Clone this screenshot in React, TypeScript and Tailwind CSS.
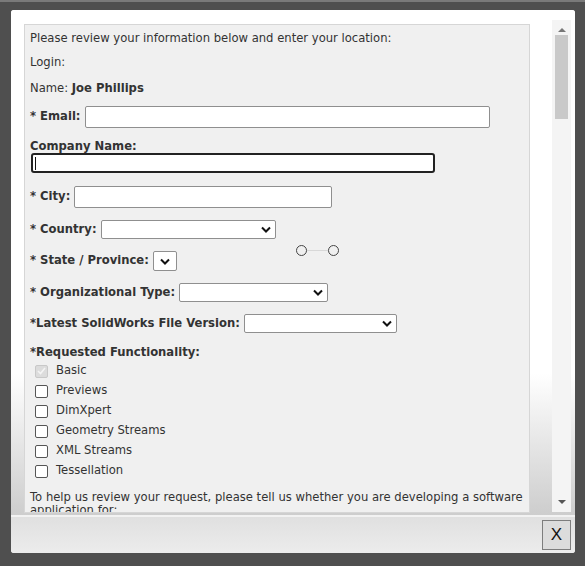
import React from "react";

const FONT = { fontFamily: '"DejaVu Sans", Verdana, sans-serif' };

function Chevron() {
  return (
    <svg width="10" height="7" viewBox="0 0 10 7" className="shrink-0">
      <path d="M1 1.5 L5 5.5 L9 1.5" fill="none" stroke="#111" strokeWidth="2" />
    </svg>
  );
}

function Select({ w }: { w: string }) {
  return (
    <div className={`${w} h-[19px] bg-white border border-[#8f8f8f] rounded-[2px] flex items-center justify-end pr-[4px]`}>
      <Chevron />
    </div>
  );
}

const FUNCTIONS = ["Previews", "DimXpert", "Geometry Streams", "XML Streams", "Tessellation"];

export default function App() {
  return (
    <div className="w-[585px] h-[566px] bg-[#4f4f4f] border-t-[2px] border-t-[#7a7a7a] pt-[8px] pl-[11px] pr-[10px] pb-[13px] overflow-hidden" style={FONT}>
      <div className="w-full h-full bg-white rounded-[3px] flex flex-col overflow-hidden">
        {/* body */}
        <div className="flex pt-[14px] pl-[13px] h-[505px] bg-gradient-to-b from-white from-[72%] to-[#cdcdcd]">
          <div className="relative w-[506px] h-[489px] bg-[#f0f0f0] border border-[#d6d6d6] overflow-hidden pl-[5px] pt-[6px] text-[11.6px] text-[#333]">
            <div className="h-[14px] leading-[14px]">Please review your information below and enter your location:</div>
            <div className="h-[14px] leading-[14px] mt-[10px]">Login:</div>
            <div className="h-[14px] leading-[14px] mt-[12px]">
              Name: <span className="font-bold">Joe Phillips</span>
            </div>
            <div className="h-[22px] mt-[11px] flex items-center font-bold">
              <span>* Email:</span>
              <div className="ml-[4px] w-[405px] h-[22px] bg-white border border-[#8f8f8f] rounded-[2px]" />
            </div>
            <div className="h-[14px] leading-[14px] mt-[11px] font-bold">Company Name:</div>
            <div className="ml-[1px] w-[404px] h-[20px] bg-white border-2 border-[#222] rounded-[3px] flex items-center pl-[2px]">
              <div className="w-px h-[13px] bg-[#111]" />
            </div>
            <div className="h-[22px] mt-[13px] flex items-center font-bold">
              <span>* City:</span>
              <div className="ml-[4px] w-[258px] h-[22px] bg-white border border-[#8f8f8f] rounded-[2px]" />
            </div>
            <div className="h-[19px] mt-[12px] flex items-center font-bold gap-[4px]">
              <span>* Country:</span>
              <Select w="w-[175px]" />
            </div>
            <div className="h-[20px] mt-[12px] flex items-center font-bold gap-[4px]">
              <span>* State / Province:</span>
              <div className="w-[24px] h-[20px] bg-white border border-[#8f8f8f] rounded-[2px] flex items-center justify-center">
                <Chevron />
              </div>
            </div>
            <div className="h-[19px] mt-[12px] flex items-center font-bold gap-[4px]">
              <span>* Organizational Type:</span>
              <Select w="w-[149px]" />
            </div>
            <div className="h-[19px] mt-[12px] flex items-center font-bold gap-[4px]">
              <span>*Latest SolidWorks File Version:</span>
              <Select w="w-[153px]" />
            </div>
            <div className="h-[14px] leading-[14px] mt-[12px] font-bold">*Requested Functionality:</div>
            <div className="mt-[2px] pl-[5px]">
              <div className="h-[20px] flex items-center gap-[8px]">
                <div className="w-[13px] h-[13px] rounded-[2px] bg-[#dcdcdc] border border-[#c8c8c8] flex items-center justify-center">
                  <svg width="9" height="8" viewBox="0 0 9 8">
                    <path d="M1 4 L3.5 6.5 L8 1" fill="none" stroke="#f4f4f4" strokeWidth="1.6" />
                  </svg>
                </div>
                <span>Basic</span>
              </div>
              {FUNCTIONS.map((f) => (
                <div key={f} className="h-[20px] flex items-center gap-[8px]">
                  <div className="w-[13px] h-[13px] rounded-[2px] bg-white border border-[#555]" />
                  <span>{f}</span>
                </div>
              ))}
            </div>
            <div className="mt-[10px] leading-[13px] pr-[4px]">
              To help us review your request, please tell us whether you are developing a software application for:
            </div>

            {/* floating indicator */}
            <div className="absolute left-[271px] top-[220px] flex items-center">
              <div className="w-[11px] h-[11px] rounded-full border-[1.5px] border-[#444]" />
              <div className="w-[21px] h-px bg-[#d8d8d8]" />
              <div className="w-[11px] h-[11px] rounded-full border-[1.5px] border-[#444]" />
            </div>
          </div>

          {/* scrollbar */}
          <div className="ml-[22px] -mt-[4px] w-[19px] h-[492px] bg-[#f4f4f4] flex flex-col items-center">
            <div className="h-[12px] flex items-end">
              <div className="w-0 h-0 border-l-[4px] border-r-[4px] border-b-[4px] border-l-transparent border-r-transparent border-b-[#777]" />
            </div>
            <div className="mt-[3px] w-[13px] h-[84px] bg-[#c9c9c9]" />
            <div className="flex-1" />
            <div className="h-[12px] flex items-start">
              <div className="w-0 h-0 border-l-[4px] border-r-[4px] border-t-[4px] border-l-transparent border-r-transparent border-t-[#555]" />
            </div>
          </div>
        </div>

        {/* footer */}
        <div className="flex-1 border-t-[2px] border-t-[#f2f2f2] bg-gradient-to-b from-[#e0e0e0] to-[#ececec] flex items-center justify-end pr-[4px]">
          <div className="w-[29px] h-[30px] bg-[#dcdcdc] border border-[#7d7d7d] flex items-center justify-center text-[17px] text-[#111]" style={{ fontFamily: '"Liberation Sans", Arial, sans-serif' }}>
            X
          </div>
        </div>
      </div>
    </div>
  );
}
